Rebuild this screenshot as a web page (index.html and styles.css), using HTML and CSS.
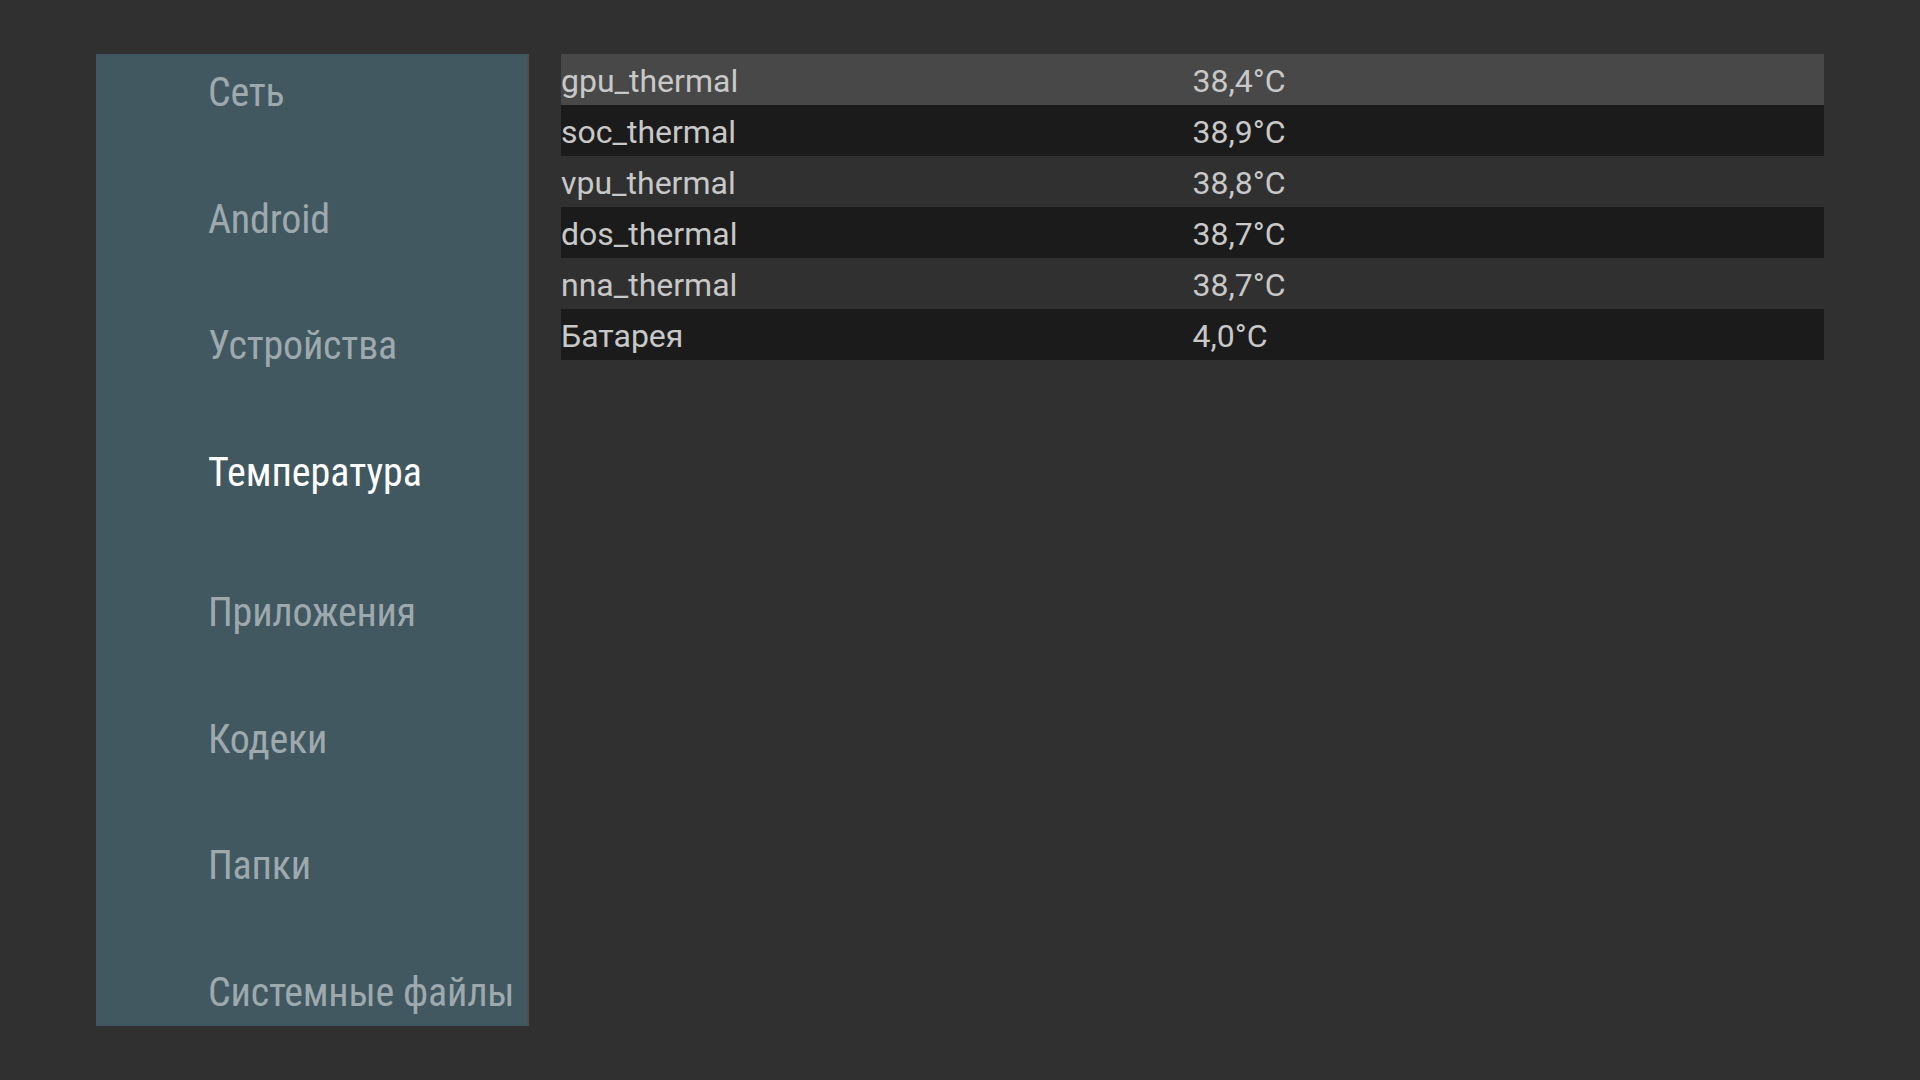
FILE: index.html
```html
<!DOCTYPE html>
<html lang="ru">
<head>
    <meta charset="UTF-8">
    <title>Температура</title>
    <link rel="stylesheet" href="styles.css">
</head>
<body>
    <div class="screen">
        <nav class="menu">
            <div class="menu-item">Сеть</div>
            <div class="menu-item">Android</div>
            <div class="menu-item">Устройства</div>
            <div class="menu-item active">Температура</div>
            <div class="menu-item">Приложения</div>
            <div class="menu-item">Кодеки</div>
            <div class="menu-item">Папки</div>
            <div class="menu-item">Системные файлы</div>
        </nav>

        <div class="sensors">
            <div class="sensor-row focused">
                <span>gpu_thermal</span><span>38,4°C</span>
            </div>
            <div class="sensor-row">
                <span>soc_thermal</span><span>38,9°C</span>
            </div>
            <div class="sensor-row">
                <span>vpu_thermal</span><span>38,8°C</span>
            </div>
            <div class="sensor-row">
                <span>dos_thermal</span><span>38,7°C</span>
            </div>
            <div class="sensor-row">
                <span>nna_thermal</span><span>38,7°C</span>
            </div>
            <div class="sensor-row">
                <span>Батарея</span><span>4,0°C</span>
            </div>
        </div>
    </div>
</body>
</html>
```

FILE: styles.css
```css
/* Base */
body {
    margin: 0;
    background: #303030;
    font-family: Roboto, "Noto Sans", sans-serif;
}

.screen {
    display: flex;
    align-items: flex-start;
    gap: 32px;
    padding: 54px 0 0 96px;
    height: 1080px;
    box-sizing: border-box;
}

/* Left menu */
.menu {
    width: 433px;
    height: 972px;
    flex: none;
    box-sizing: border-box;
    padding-top: 15px;
    background: #415861;
    border-right: 2px solid #4a4f52;
    overflow: hidden;
    display: flex;
    flex-direction: column;
}

.menu-item {
    height: 126.5px;
    flex: none;
    padding-left: 112px;
    font-size: 40px;
    line-height: 47px;
    font-stretch: condensed;
    letter-spacing: -0.2px;
    color: #9ea9ae;
    white-space: nowrap;
}

.menu-item.active {
    height: 140.5px;
    letter-spacing: 0;
    color: #ffffff;
}

/* Sensor table */
.sensors {
    width: 1263px;
    display: flex;
    flex-direction: column;
}

.sensor-row {
    display: grid;
    grid-template-columns: 1fr 1fr;
    height: 51px;
    box-sizing: border-box;
    padding-top: 4px;
    font-size: 32px;
    line-height: 47px;
    color: #c8c8c8;
}

.sensor-row:nth-child(even) {
    background: #1b1b1b;
}

.sensor-row.focused {
    background: #484848;
}
```
